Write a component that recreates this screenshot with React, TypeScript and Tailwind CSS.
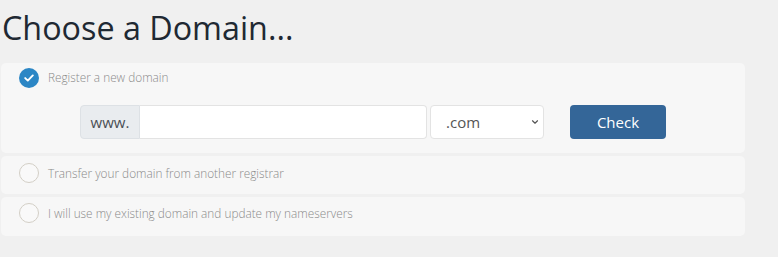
import { ChevronDown } from 'lucide-react'

function Radio({ checked }: { checked?: boolean }) {
  if (checked) {
    return (
      <span className="w-[20px] h-[20px] rounded-full bg-[#2b86c5] flex items-center justify-center shrink-0">
        <svg width="10" height="8" viewBox="0 0 10 8" fill="none">
          <path d="M1.2 4.1 L3.8 6.6 L8.8 1.4" stroke="white" strokeWidth="1.9" strokeLinecap="round" strokeLinejoin="round" />
        </svg>
      </span>
    )
  }
  return <span className="w-[20px] h-[20px] rounded-full border border-[#d3cfc6] bg-[#f9f9f9] shrink-0" />
}

export default function App() {
  return (
    <div className="w-[778px] h-[257px] overflow-hidden bg-[#f0f0f0] font-['Open_Sans',sans-serif]">
      <h1 className="pl-[2px] pt-[8px] text-[32.3px] leading-[38px] text-[#1f2933]">Choose a Domain...</h1>

      <div className="mt-[17px] ml-[1px] w-[744px] flex flex-col gap-[3px]">
        <div className="h-[90px] rounded-[5px] bg-[#f7f7f7] pl-[18px]">
          <div className="h-[30px] flex items-center gap-[9px]">
            <Radio checked />
            <span className="text-[11.8px] font-light text-[#8a8a8a]">Register a new domain</span>
          </div>
          <div className="mt-[12px] ml-[61px] flex items-center">
            <span className="h-[34px] w-[60px] flex items-center justify-center rounded-l-[4px] border border-[#dde1e5] bg-[#e9ecef] text-[15px] text-[#4a4f55]">
              www.
            </span>
            <span className="h-[34px] w-[287px] rounded-r-[4px] border border-l-0 border-[#e3e3e3] bg-white" />
            <span className="ml-[3px] h-[34px] w-[114px] rounded-[4px] border border-[#e3e3e3] bg-white flex items-center justify-between pl-[15px] pr-[3px] text-[15px] text-[#555]">
              .com
              <ChevronDown size={10} strokeWidth={2.8} className="text-[#555]" />
            </span>
            <button className="ml-[26px] h-[34px] w-[96px] rounded-[4px] bg-[#346698] text-white text-[15px]">
              Check
            </button>
          </div>
        </div>

        <div className="h-[38px] rounded-[5px] bg-[#f7f7f7] pl-[18px] pt-[7px] flex items-start gap-[9px]">
          <Radio />
          <span className="text-[11.8px] leading-[20px] font-light text-[#8a8a8a]">Transfer your domain from another registrar</span>
        </div>

        <div className="h-[39px] rounded-[5px] bg-[#f7f7f7] pl-[18px] pt-[6px] flex items-start gap-[9px]">
          <Radio />
          <span className="text-[11.8px] leading-[20px] font-light text-[#8a8a8a]">I will use my existing domain and update my nameservers</span>
        </div>
      </div>
    </div>
  )
}
